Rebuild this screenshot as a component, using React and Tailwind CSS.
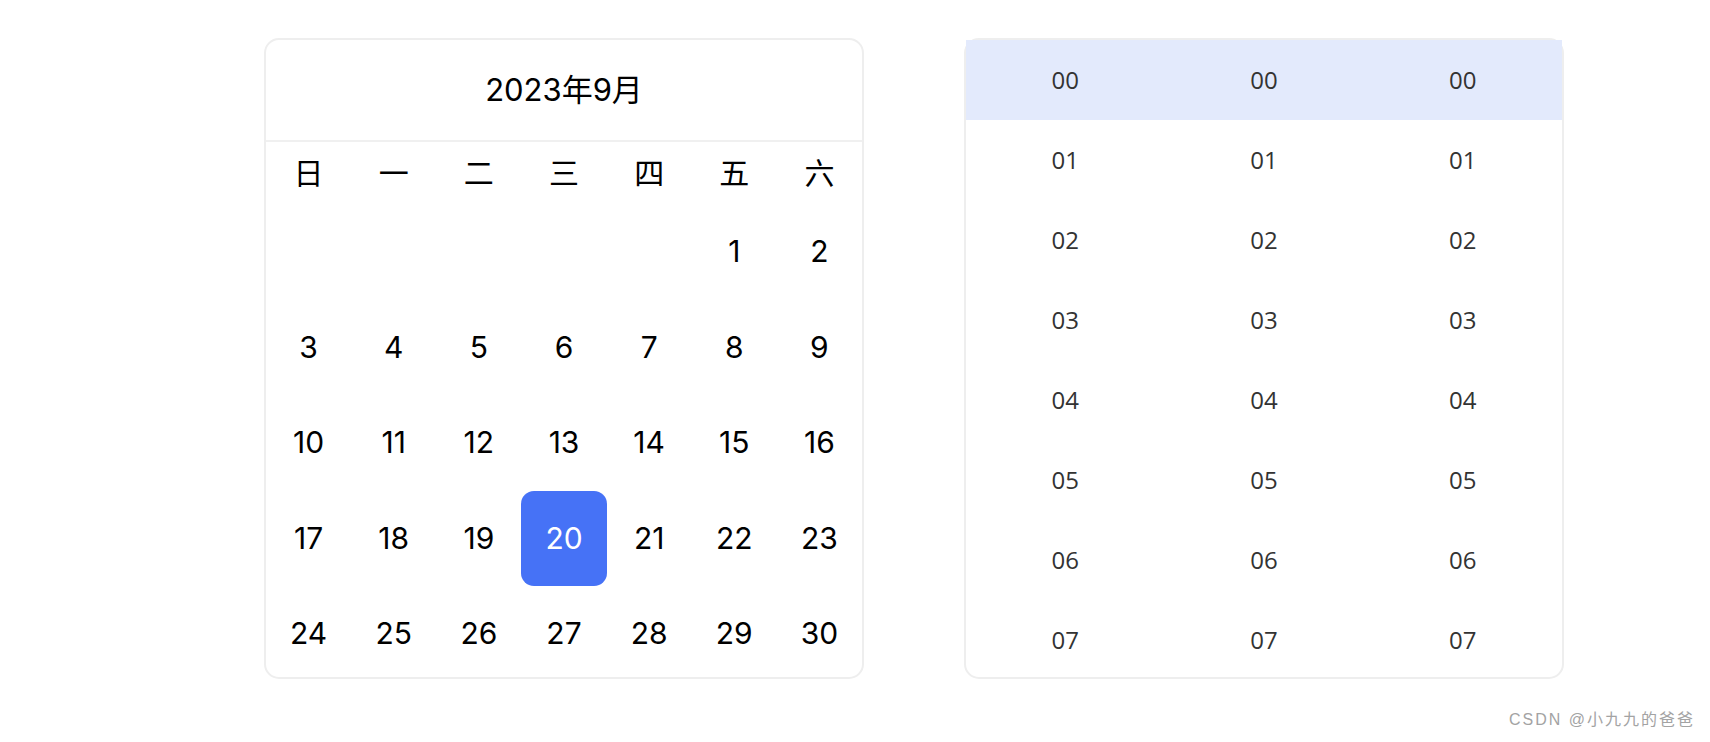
export default function App() {
  const weeks = ['日', '一', '二', '三', '四', '五', '六'];
  const days = [null, null, null, null, null];
  for (let i = 1; i <= 30; i++) days.push(i);
  const rows = ['00', '01', '02', '03', '04', '05', '06', '07'];
  const cjk = { fontFamily: '"Inter", "Noto Sans CJK SC", sans-serif' };
  const timeFont = { fontFamily: '"Open Sans", "Noto Sans", sans-serif' };
  return (
    <div className="w-[1710px] h-[742px] bg-white overflow-hidden">
      <div className="flex gap-[100px] pl-[264px] pt-[38px]">
        <div className="w-[600px] h-[641px] border-2 border-[#eeeeee] rounded-[15px] bg-white" style={cjk}>
          <div className="h-[102px] flex items-center justify-center text-[31px] text-black border-b-2 border-[#f0f0f0]">
            2023年9月
          </div>
          <div className="grid grid-cols-7 h-[62px] items-center text-[30px] text-black">
            {weeks.map((w) => (
              <div key={w} className="flex justify-center">{w}</div>
            ))}
          </div>
          <div className="grid grid-cols-7 auto-rows-[95.5px] text-[30px] text-black">
            {days.map((d, i) => (
              <div
                key={i}
                className={
                  d === 20
                    ? 'flex items-center justify-center rounded-[13px] bg-[#4672f6] text-white'
                    : 'flex items-center justify-center'
                }
              >
                {d}
              </div>
            ))}
          </div>
        </div>
        <div className="w-[600px] h-[641px] border-2 border-[#eeeeee] rounded-[15px] bg-white" style={timeFont}>
          {rows.map((r, i) => (
            <div
              key={r}
              className={
                i === 0
                  ? 'grid grid-cols-3 h-[80px] items-center bg-[#e3eafc] text-[24px] text-[#333333]'
                  : 'grid grid-cols-3 h-[80px] items-center text-[24px] text-[#333333]'
              }
            >
              <div className="flex justify-center">{r}</div>
              <div className="flex justify-center">{r}</div>
              <div className="flex justify-center">{r}</div>
            </div>
          ))}
        </div>
      </div>
      <div className="flex justify-end pr-[15px] mt-[31px]">
        <div
          className="text-[16px] leading-[20px] tracking-[2px] text-[#a3a3a3]"
          style={{ fontFamily: '"Liberation Sans", "Noto Sans CJK SC", sans-serif' }}
        >
          CSDN @小九九的爸爸
        </div>
      </div>
    </div>
  );
}
